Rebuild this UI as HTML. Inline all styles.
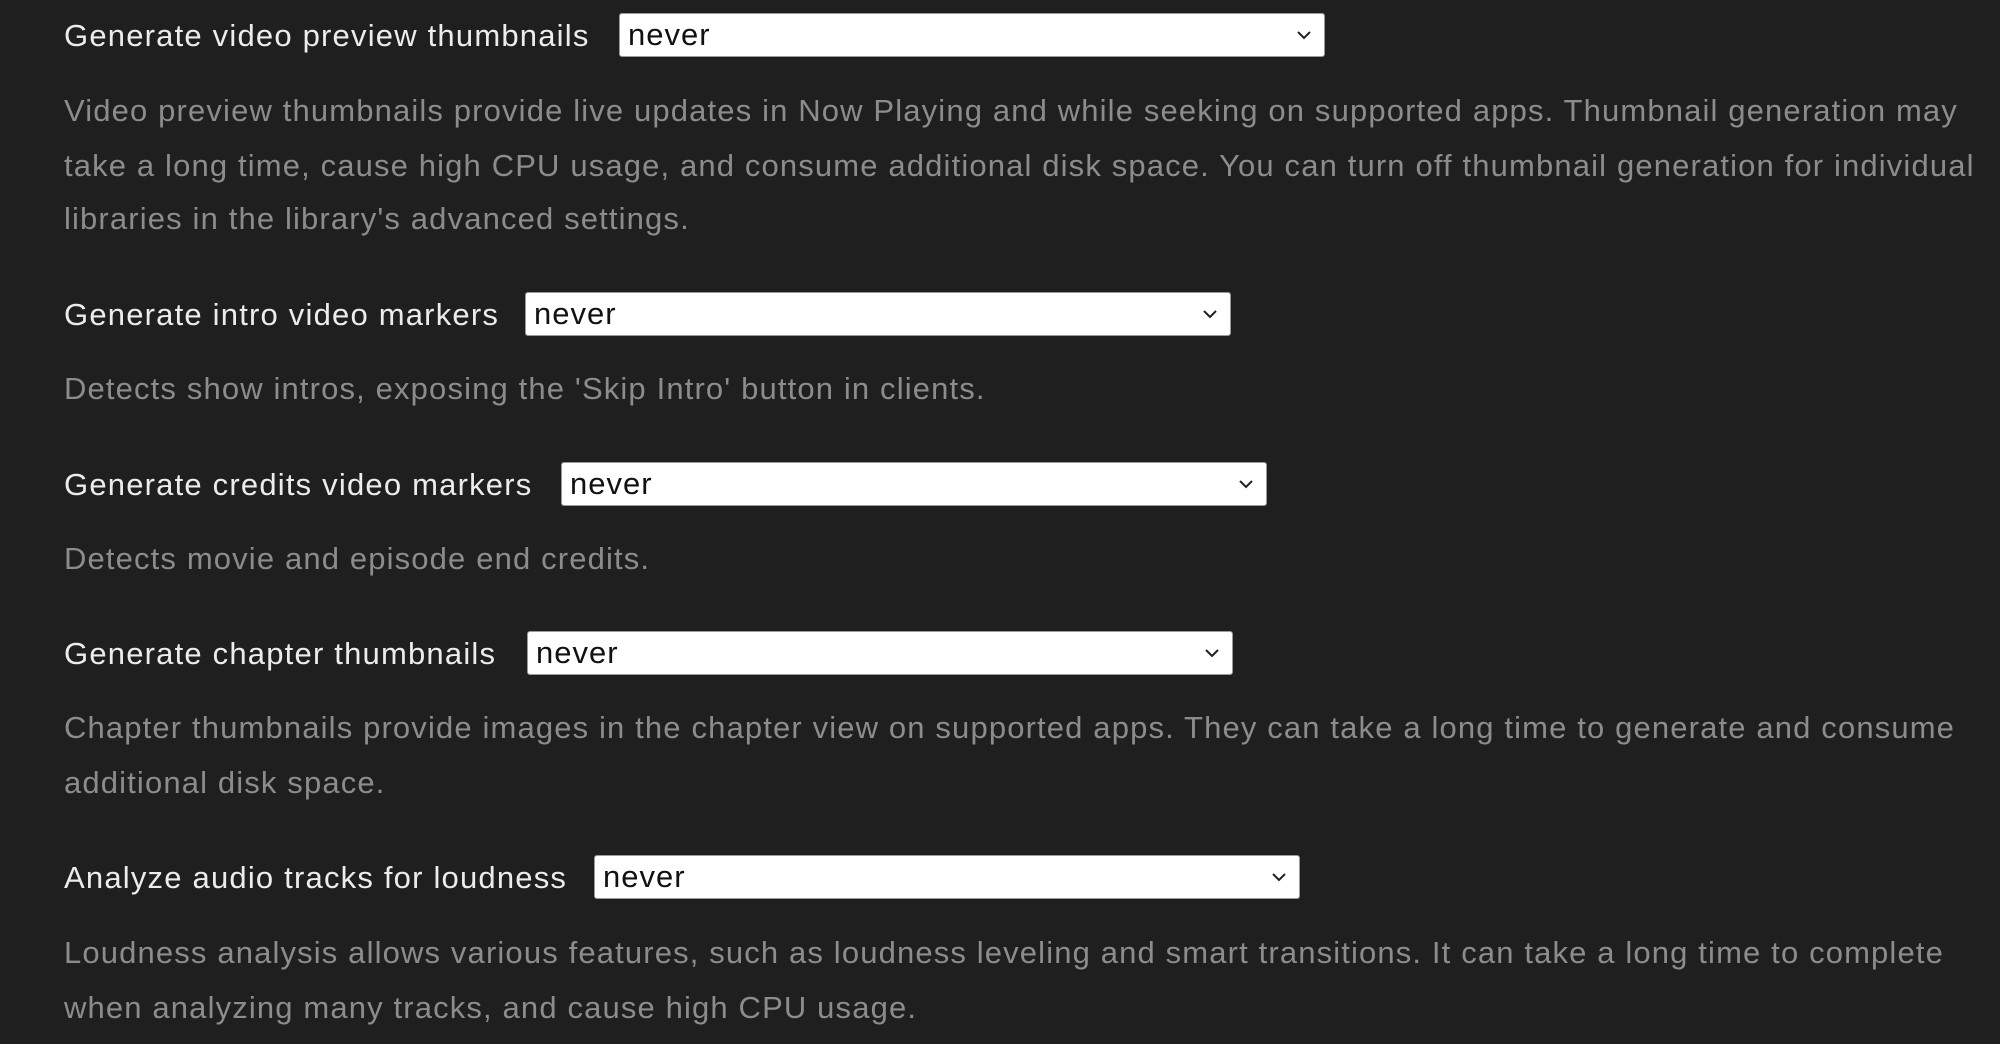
<!DOCTYPE html>
<html><head><meta charset="utf-8"><style>
html,body{margin:0;padding:0;width:2000px;height:1044px;overflow:hidden;background:#1f1f1f;}
body{position:relative;font-family:"Liberation Sans",sans-serif;}
.l{position:absolute;left:64px;color:#ececec;font-size:31px;letter-spacing:1.2px;line-height:36px;white-space:nowrap;}
.d{position:absolute;left:64px;color:#8c8c8c;font-size:31px;letter-spacing:1.14px;line-height:36px;white-space:nowrap;}
.s{position:absolute;width:704px;height:42px;background:#fff;border:1px solid #9a9a9a;border-radius:3px;}
.s span{position:absolute;left:8px;top:3px;font-size:31px;letter-spacing:1px;line-height:36px;color:#111;}
.s svg{position:absolute;right:12px;top:15px;}
</style></head><body>
<div class="l" style="top:18px">Generate video preview thumbnails</div>
<div class="s" style="left:619px;top:13px"><span>never</span><svg width="16" height="12" viewBox="0 0 16 12"><path d="M2 3 L8 9 L14 3" fill="none" stroke="#222" stroke-width="2"/></svg></div>
<div class="d" style="top:93px">Video preview thumbnails provide live updates in Now Playing and while seeking on supported apps. Thumbnail generation may</div>
<div class="d" style="top:148px">take a long time, cause high CPU usage, and consume additional disk space. You can turn off thumbnail generation for individual</div>
<div class="d" style="top:201px">libraries in the library's advanced settings.</div>

<div class="l" style="top:297px">Generate intro video markers</div>
<div class="s" style="left:525px;top:292px"><span>never</span><svg width="16" height="12" viewBox="0 0 16 12"><path d="M2 3 L8 9 L14 3" fill="none" stroke="#222" stroke-width="2"/></svg></div>
<div class="d" style="top:371px">Detects show intros, exposing the 'Skip Intro' button in clients.</div>

<div class="l" style="top:467px">Generate credits video markers</div>
<div class="s" style="left:561px;top:462px"><span>never</span><svg width="16" height="12" viewBox="0 0 16 12"><path d="M2 3 L8 9 L14 3" fill="none" stroke="#222" stroke-width="2"/></svg></div>
<div class="d" style="top:541px">Detects movie and episode end credits.</div>

<div class="l" style="top:636px">Generate chapter thumbnails</div>
<div class="s" style="left:527px;top:631px"><span>never</span><svg width="16" height="12" viewBox="0 0 16 12"><path d="M2 3 L8 9 L14 3" fill="none" stroke="#222" stroke-width="2"/></svg></div>
<div class="d" style="top:710px">Chapter thumbnails provide images in the chapter view on supported apps. They can take a long time to generate and consume</div>
<div class="d" style="top:765px">additional disk space.</div>

<div class="l" style="top:860px">Analyze audio tracks for loudness</div>
<div class="s" style="left:594px;top:855px"><span>never</span><svg width="16" height="12" viewBox="0 0 16 12"><path d="M2 3 L8 9 L14 3" fill="none" stroke="#222" stroke-width="2"/></svg></div>
<div class="d" style="top:935px">Loudness analysis allows various features, such as loudness leveling and smart transitions. It can take a long time to complete</div>
<div class="d" style="top:990px">when analyzing many tracks, and cause high CPU usage.</div>
</body></html>
